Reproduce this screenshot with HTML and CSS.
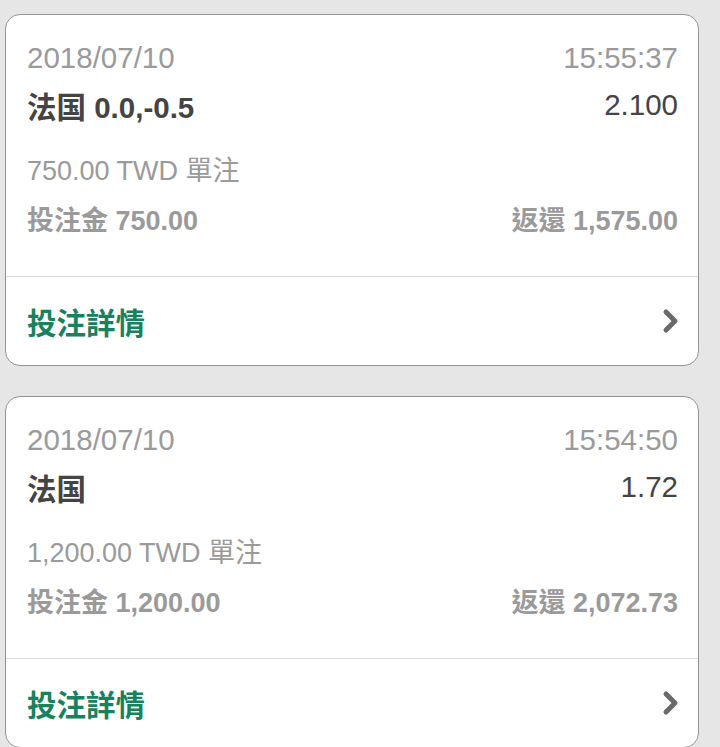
FILE: index.html
```html
<!DOCTYPE html>
<html>
<head>
<title>投注記錄</title>
<meta charset="utf-8" />
<link rel="stylesheet" href="styles.css">
</head>
<body>

<div class="list">

	<div class="bet">
		<div class="bet-body">
			<div class="row head muted">
				<span>2018/07/10</span>
				<span>15:55:37</span>
			</div>
			<div class="row strong">
				<span class="bold">法国 0.0,-0.5</span>
				<span>2.100</span>
			</div>
			<div class="row small muted spaced">
				<span>750.00 TWD 單注</span>
			</div>
			<div class="row small muted bold">
				<span>投注金 750.00</span>
				<span>返還 1,575.00</span>
			</div>
		</div>
		<a class="bet-link" href="#">
			<span>投注詳情</span>
			<svg class="chevron" width="18" height="26" viewBox="0 0 18 26"><path d="M4 4 L13 13 L4 22" fill="none" stroke="#6a6a6a" stroke-width="5" stroke-linecap="round" stroke-linejoin="round"/></svg>
		</a>
	</div>

	<div class="bet">
		<div class="bet-body">
			<div class="row head muted">
				<span>2018/07/10</span>
				<span>15:54:50</span>
			</div>
			<div class="row strong">
				<span class="bold">法国</span>
				<span>1.72</span>
			</div>
			<div class="row small muted spaced">
				<span>1,200.00 TWD 單注</span>
			</div>
			<div class="row small muted bold">
				<span>投注金 1,200.00</span>
				<span>返還 2,072.73</span>
			</div>
		</div>
		<a class="bet-link" href="#">
			<span>投注詳情</span>
			<svg class="chevron" width="18" height="26" viewBox="0 0 18 26"><path d="M4 4 L13 13 L4 22" fill="none" stroke="#6a6a6a" stroke-width="5" stroke-linecap="round" stroke-linejoin="round"/></svg>
		</a>
	</div>

</div>

</body>
</html>
```

FILE: styles.css
```css
body {
	margin: 0;
	padding: 14px 21px 0 5px;
	background: #e6e6e6;
	font: 29.5px "Liberation Sans", "Noto Sans CJK TC", sans-serif;
	overflow: hidden;
}

.list {
	display: flex;
	flex-direction: column;
	gap: 30px;
}

.bet {
	background: #fff;
	border: 1.5px solid #939393;
	border-radius: 15px;
	overflow: hidden;
}

.bet-body {
	padding: 15px 20px 33px 21px;
	border-bottom: 1px solid #d9d9d9;
}

.row {
	display: flex;
	justify-content: space-between;
	align-items: center;
	height: 50px;
}

.head {
	box-sizing: border-box;
	padding-top: 5px;
}

.small {
	font-size: 27px;
}

.spaced {
	margin-top: 13px;
}

.muted {
	color: #9a9a9a;
}

.strong {
	color: #444;
}

.bold {
	font-weight: bold;
}

.bet-link {
	display: flex;
	justify-content: space-between;
	align-items: center;
	height: 88px;
	padding: 0 18px 0 21px;
	color: #18815d;
	font-weight: bold;
	text-decoration: none;
}
```
